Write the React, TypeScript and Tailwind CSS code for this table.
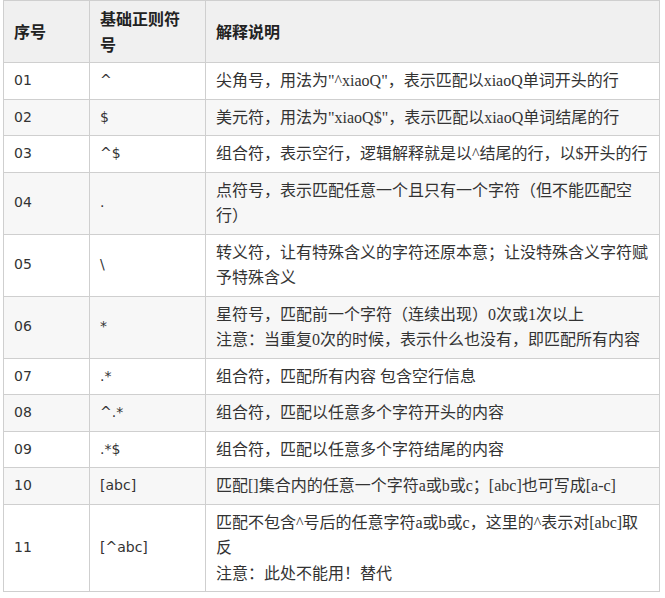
import type { ReactNode } from 'react'

type Row = { no: string; sym: string; desc: ReactNode }

const rows: Row[] = [
  { no: '01', sym: '^', desc: '尖角号，用法为"^xiaoQ"，表示匹配以xiaoQ单词开头的行' },
  { no: '02', sym: '$', desc: '美元符，用法为"xiaoQ$"，表示匹配以xiaoQ单词结尾的行' },
  { no: '03', sym: '^$', desc: '组合符，表示空行，逻辑解释就是以^结尾的行，以$开头的行' },
  {
    no: '04',
    sym: '.',
    desc: (
      <>
        点符号，表示匹配任意一个且只有一个字符（但不能匹配空
        <br />
        行）
      </>
    ),
  },
  {
    no: '05',
    sym: '\\',
    desc: (
      <>
        转义符，让有特殊含义的字符还原本意；让没特殊含义字符赋
        <br />
        予特殊含义
      </>
    ),
  },
  {
    no: '06',
    sym: '*',
    desc: (
      <>
        星符号，匹配前一个字符（连续出现）0次或1次以上
        <br />
        注意：当重复0次的时候，表示什么也没有，即匹配所有内容
      </>
    ),
  },
  { no: '07', sym: '.*', desc: '组合符，匹配所有内容 包含空行信息' },
  { no: '08', sym: '^.*', desc: '组合符，匹配以任意多个字符开头的内容' },
  { no: '09', sym: '.*$', desc: '组合符，匹配以任意多个字符结尾的内容' },
  { no: '10', sym: '[abc]', desc: '匹配[]集合内的任意一个字符a或b或c；[abc]也可写成[a-c]' },
  {
    no: '11',
    sym: '[^abc]',
    desc: (
      <>
        匹配不包含^号后的任意字符a或b或c，这里的^表示对[abc]取
        <br />
        反
        <br />
        注意：此处不能用！替代
      </>
    ),
  },
]

const cell = 'border border-[#cfcfcf] px-[10px] py-[5px] align-middle leading-[25.5px] whitespace-nowrap'

export default function App() {
  return (
    <div className="min-h-screen bg-white text-[#333]">
      <table className="ml-[3px] w-[657px] table-fixed border-collapse text-left">
        <thead>
          <tr className="bg-[#f0f0f0]">
            <th className={`${cell} w-[86px] font-bold text-[16px] text-[#222] font-['Noto_Sans_CJK_SC',sans-serif]`}>
              序号
            </th>
            <th className={`${cell} w-[116px] font-bold text-[16px] text-[#222] font-['Noto_Sans_CJK_SC',sans-serif]`}>
              基础正则符
              <br />号
            </th>
            <th className={`${cell} font-bold text-[16px] text-[#222] font-['Noto_Sans_CJK_SC',sans-serif]`}>
              解释说明
            </th>
          </tr>
        </thead>
        <tbody>
          {rows.map((r, i) => (
            <tr key={r.no} className={i % 2 === 1 ? 'bg-[#f7f7f7]' : 'bg-white'}>
              <td className={`${cell} text-[14px] font-['DejaVu_Sans',sans-serif]`}>{r.no}</td>
              <td className={`${cell} text-[14px] font-['DejaVu_Sans',sans-serif]`}>{r.sym}</td>
              <td className={`${cell} text-[16px] font-['Liberation_Serif','Noto_Sans_CJK_SC',serif]`}>
                {r.desc}
              </td>
            </tr>
          ))}
        </tbody>
      </table>
    </div>
  )
}
